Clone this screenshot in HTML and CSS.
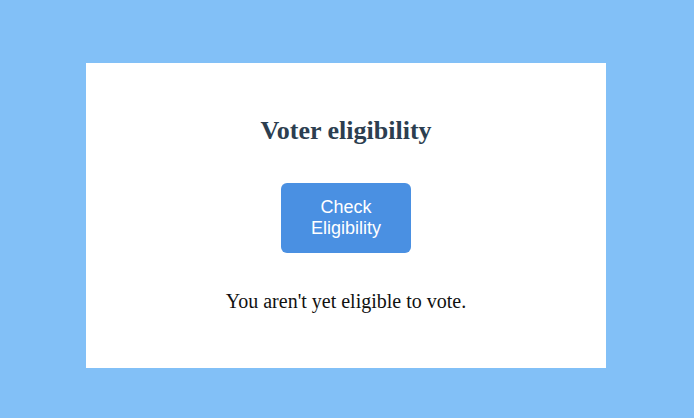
FILE: index.html
```html
<!DOCTYPE html>
<html lang="en">
<head>
<meta charset="utf-8">
<title>Voter eligibility</title>
<link rel="stylesheet" href="styles.css">
</head>
<body>
<main class="page">
  <section class="card">
    <h2 class="title">Voter eligibility</h2>
    <button class="check-btn" type="button">Check Eligibility</button>
    <p class="result">You aren't yet eligible to vote.</p>
  </section>
</main>
</body>
</html>
```

FILE: styles.css
```css
html, body {
  margin: 0;
  padding: 0;
  height: 100%;
}
body {
  background: #82c0f7;
  font-family: "Liberation Serif", "Times New Roman", serif;
}
.page {
  display: flex;
  justify-content: flex-start;
  align-items: flex-start;
  padding: 63px 0 0 86px;
}
.card {
  box-sizing: border-box;
  width: 520px;
  height: 305px;
  background: #ffffff;
  padding: 53px 0 0;
  display: flex;
  flex-direction: column;
  align-items: center;
  text-align: center;
}
.title {
  margin: 0 0 37px;
  font-size: 26px;
  line-height: 30px;
  font-weight: bold;
  color: #2c3e50;
}
.check-btn {
  box-sizing: border-box;
  width: 130px;
  height: 70px;
  padding: 0 30px;
  margin: 0 0 37px;
  border: none;
  border-radius: 6px;
  background: #4a90e2;
  color: #ffffff;
  font-family: "Liberation Sans", Arial, sans-serif;
  font-size: 18px;
  line-height: 21px;
  cursor: pointer;
}
.result {
  margin: 0;
  font-size: 20px;
  line-height: 23px;
  color: #111111;
}
```
